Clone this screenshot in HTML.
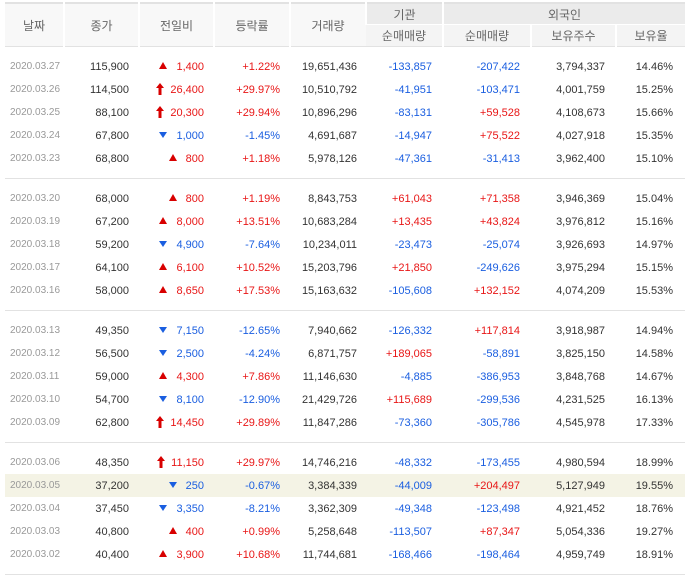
<!DOCTYPE html>
<html><head><meta charset="utf-8"><style>
body{margin:0;background:#fff;width:694px;height:581px;overflow:hidden;font-family:Tahoma,"Liberation Sans","Noto Sans CJK KR",sans-serif}
table{position:absolute;left:5px;top:2px;border-collapse:collapse;table-layout:fixed;width:680px}
th{font-weight:normal;color:#666;font-size:12px;font-family:"Liberation Sans","Noto Sans CJK KR",sans-serif;border-left:2px solid #fff;padding:0;background:#f8f8f8}
th:first-child{border-left:none}
tr.h1 th{height:20px}
tr.h2 th{height:21px}
th.g{background:#ebebeb;border-bottom:1px solid #fff}
th.s{background:#f4f4f4}
thead{border-top:2px solid #e2e2e2;border-bottom:1px solid #e2e2e2}
td{font-size:11px;color:#333;text-align:right;padding:0;height:23px;line-height:14px;white-space:nowrap}
td.d{color:#999;font-size:10px;text-align:left;padding-left:5px}
td.c1{padding-right:10px}
td.c2{padding-right:10px}
td.c3{padding-right:10px}
td.c4{padding-right:9px}
td.c5{padding-right:11px}
td.c6{padding-right:11px}
td.c7{padding-right:11px}
td.c8{padding-right:12px}
.r{color:#e81616}.b{color:#1a5ee0}
tr.sp td{height:8px;line-height:0}
tr.sb td{height:8px;line-height:0;border-bottom:1px solid #e2e2e2}
tr.hl td{background:#f4f3e5}
.tu,.td{display:inline-block;width:0;height:0;border-left:4px solid transparent;border-right:4px solid transparent;margin-right:9px;vertical-align:1px}
.tu{border-bottom:7px solid #d80000}
.td{border-top:6px solid #1a5ee0}
.ar{display:inline-block;vertical-align:top;margin-top:0px;margin-right:6px}
</style></head><body>
<table>
<colgroup><col style="width:59px"><col style="width:75px"><col style="width:75px"><col style="width:76px"><col style="width:76px"><col style="width:77px"><col style="width:88px"><col style="width:85px"><col style="width:69px"></colgroup>
<thead>
<tr class="h1"><th rowspan="2">날짜</th><th rowspan="2">종가</th><th rowspan="2">전일비</th><th rowspan="2">등락률</th><th rowspan="2">거래량</th><th class="g">기관</th><th class="g" colspan="3">외국인</th></tr>
<tr class="h2"><th class="s">순매매량</th><th class="s">순매매량</th><th class="s">보유주수</th><th class="s">보유율</th></tr>
</thead>
<tbody id="tb"></tbody>
</table>
<script>
var U='<svg class="ar" width="8" height="12" viewBox="0 0 8 12"><path d="M4 0L8 5H5.5V12H2.5V5H0Z" fill="#d80000"/></svg>';
var data=[
[["2020.03.27","115,900","u","1,400","+1.22%","19,651,436","-133,857","-207,422","3,794,337","14.46%"],
["2020.03.26","114,500","U","26,400","+29.97%","10,510,792","-41,951","-103,471","4,001,759","15.25%"],
["2020.03.25","88,100","U","20,300","+29.94%","10,896,296","-83,131","+59,528","4,108,673","15.66%"],
["2020.03.24","67,800","d","1,000","-1.45%","4,691,687","-14,947","+75,522","4,027,918","15.35%"],
["2020.03.23","68,800","u","800","+1.18%","5,978,126","-47,361","-31,413","3,962,400","15.10%"]],
[["2020.03.20","68,000","u","800","+1.19%","8,843,753","+61,043","+71,358","3,946,369","15.04%"],
["2020.03.19","67,200","u","8,000","+13.51%","10,683,284","+13,435","+43,824","3,976,812","15.16%"],
["2020.03.18","59,200","d","4,900","-7.64%","10,234,011","-23,473","-25,074","3,926,693","14.97%"],
["2020.03.17","64,100","u","6,100","+10.52%","15,203,796","+21,850","-249,626","3,975,294","15.15%"],
["2020.03.16","58,000","u","8,650","+17.53%","15,163,632","-105,608","+132,152","4,074,209","15.53%"]],
[["2020.03.13","49,350","d","7,150","-12.65%","7,940,662","-126,332","+117,814","3,918,987","14.94%"],
["2020.03.12","56,500","d","2,500","-4.24%","6,871,757","+189,065","-58,891","3,825,150","14.58%"],
["2020.03.11","59,000","u","4,300","+7.86%","11,146,630","-4,885","-386,953","3,848,768","14.67%"],
["2020.03.10","54,700","d","8,100","-12.90%","21,429,726","+115,689","-299,536","4,231,525","16.13%"],
["2020.03.09","62,800","U","14,450","+29.89%","11,847,286","-73,360","-305,786","4,545,978","17.33%"]],
[["2020.03.06","48,350","U","11,150","+29.97%","14,746,216","-48,332","-173,455","4,980,594","18.99%"],
["2020.03.05","37,200","d","250","-0.67%","3,384,339","-44,009","+204,497","5,127,949","19.55%"],
["2020.03.04","37,450","d","3,350","-8.21%","3,362,309","-49,348","-123,498","4,921,452","18.76%"],
["2020.03.03","40,800","u","400","+0.99%","5,258,648","-113,507","+87,347","5,054,336","19.27%"],
["2020.03.02","40,400","u","3,900","+10.68%","11,744,681","-168,466","-198,464","4,959,749","18.91%"]]];
function sc(v){return v[0]=='+'?'r':(v[0]=='-'?'b':'')}
var h='';
data.forEach(function(g){
h+='<tr class="sp"><td colspan="9"></td></tr>';
g.forEach(function(r){
var ic=r[2]=='u'?'<span class="tu"></span>':r[2]=='U'?U:'<span class="td"></span>';
var cc=r[2]=='d'?'b':'r';
h+='<tr'+(r[0]=='2020.03.05'?' class="hl"':'')+'><td class="d">'+r[0]+'</td><td class="c1">'+r[1]+'</td><td class="c2 '+cc+'">'+ic+r[3]+'</td><td class="c3 '+sc(r[4])+'">'+r[4]+'</td><td class="c4">'+r[5]+'</td><td class="c5 '+sc(r[6])+'">'+r[6]+'</td><td class="c6 '+sc(r[7])+'">'+r[7]+'</td><td class="c7">'+r[8]+'</td><td class="c8">'+r[9]+'</td></tr>';
});
h+='<tr class="sb"><td colspan="9"></td></tr>';
});
document.getElementById('tb').innerHTML=h;
</script>
</body></html>
